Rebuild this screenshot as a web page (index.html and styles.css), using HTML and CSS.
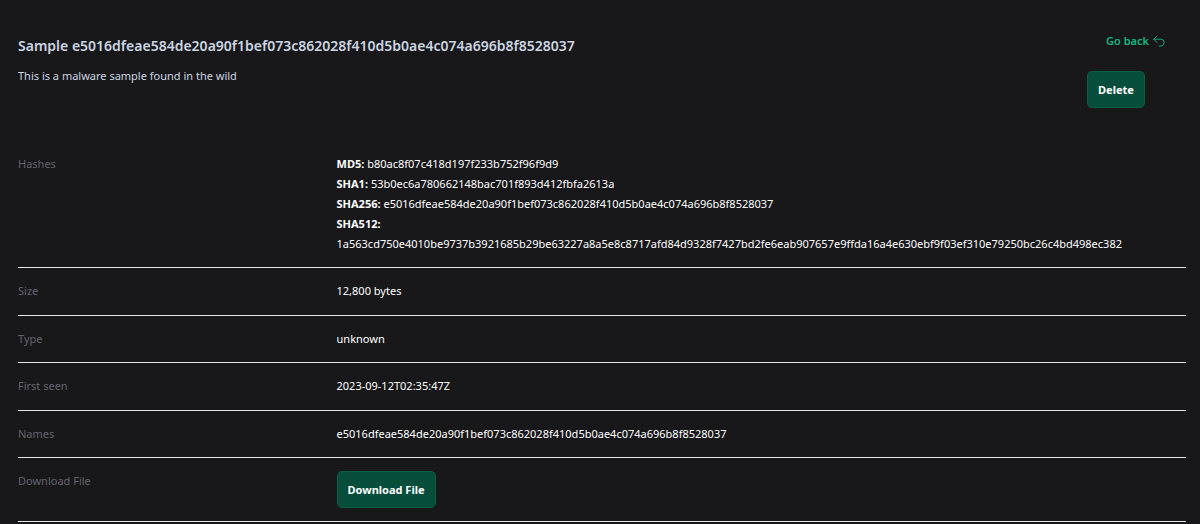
FILE: index.html
```
<!DOCTYPE html>
<html lang="en">
<head>
    <meta charset="UTF-8">
    <meta name="viewport" content="width=device-width, initial-scale=1.0">
    <title>Sample details</title>
    <link rel="stylesheet" href="styles.css">
</head>
<body>

    <main class="sample">
        <header class="sample-header">
            <div class="sample-title">
                <h3>Sample e5016dfeae584de20a90f1bef073c862028f410d5b0ae4c074a696b8f8528037</h3>
                <p>This is a malware sample found in the wild</p>
            </div>
            <div class="sample-actions">
                <a class="back-link" href="#">Go back
                    <svg width="12" height="12" viewBox="0 0 12 12" fill="none" stroke="currentColor" stroke-width="0.9" stroke-linecap="round" stroke-linejoin="round" aria-hidden="true">
                        <path d="M4 7.5 L0.8 4.2 L4 1 M0.8 4.2 H8 A3.1 3.4 0 0 1 8 11 H6.2"/>
                    </svg>
                </a>
                <button type="button">Delete</button>
            </div>
        </header>

        <!-- Sample details -->
        <dl class="details">
            <div class="row">
                <dt>Hashes</dt>
                <dd>
                    <strong>MD5:</strong> b80ac8f07c418d197f233b752f96f9d9<br>
                    <strong>SHA1:</strong> 53b0ec6a780662148bac701f893d412fbfa2613a<br>
                    <strong>SHA256:</strong> e5016dfeae584de20a90f1bef073c862028f410d5b0ae4c074a696b8f8528037<br>
                    <strong>SHA512:</strong><br>
                    1a563cd750e4010be9737b3921685b29be63227a8a5e8c8717afd84d9328f7427bd2fe6eab907657e9ffda16a4e630ebf9f03ef310e79250bc26c4bd498ec382
                </dd>
            </div>
            <div class="row">
                <dt>Size</dt>
                <dd>12,800 bytes</dd>
            </div>
            <div class="row">
                <dt>Type</dt>
                <dd>unknown</dd>
            </div>
            <div class="row">
                <dt>First seen</dt>
                <dd>2023-09-12T02:35:47Z</dd>
            </div>
            <div class="row">
                <dt>Names</dt>
                <dd>e5016dfeae584de20a90f1bef073c862028f410d5b0ae4c074a696b8f8528037</dd>
            </div>
            <div class="row">
                <dt>Download File</dt>
                <dd><button type="button">Download File</button></dd>
            </div>
        </dl>
    </main>

</body>
</html>
```
FILE: styles.css
```
* {
    box-sizing: border-box;
}
body {
    font-family: "Segoe UI", "Noto Sans", "Open Sans", sans-serif;
    font-size: 11px;
    line-height: 20px;
    background-color: #18181b;
    color: white;
    margin: 0;
}
.sample {
    padding: 31px 14px 0 18px;
}
.sample-header {
    display: flex;
    justify-content: space-between;
    margin-bottom: 33px;
}
.sample-title h3 {
    color: #cbd5e1;
    font-size: 14px;
    font-weight: 600;
    line-height: 30px;
    margin: 0;
}
.sample-title p {
    color: #cbd5e1;
    margin: 5px 0 0;
}
.sample-actions {
    display: flex;
    flex-direction: column;
    align-items: flex-start;
    gap: 20px;
    padding-right: 21px;
}
.back-link {
    display: flex;
    align-items: center;
    gap: 4px;
    margin-left: 19px;
    color: #10b981;
    font-weight: 600;
    text-decoration: none;
}
button {
    height: 37px;
    padding: 0 10px;
    background-color: #064e3b;
    border: 1px solid #065f46;
    border-radius: 5px;
    color: white;
    font: inherit;
    font-weight: 700;
    cursor: pointer;
}
button:hover {
    background-color: #065f46;
}
.details {
    margin: 0;
}
.row {
    display: grid;
    grid-template-columns: 3fr 8fr;
    padding: 13px 0;
    border-bottom: 1px solid #e5e7eb;
}
.row:nth-child(even) {
    padding-bottom: 14px;
}
.row:last-child {
    padding-bottom: 13px;
}
dt {
    color: #63636c;
}
dd {
    margin: 0;
    overflow-wrap: anywhere;
}
dd button {
    display: block;
}
```
